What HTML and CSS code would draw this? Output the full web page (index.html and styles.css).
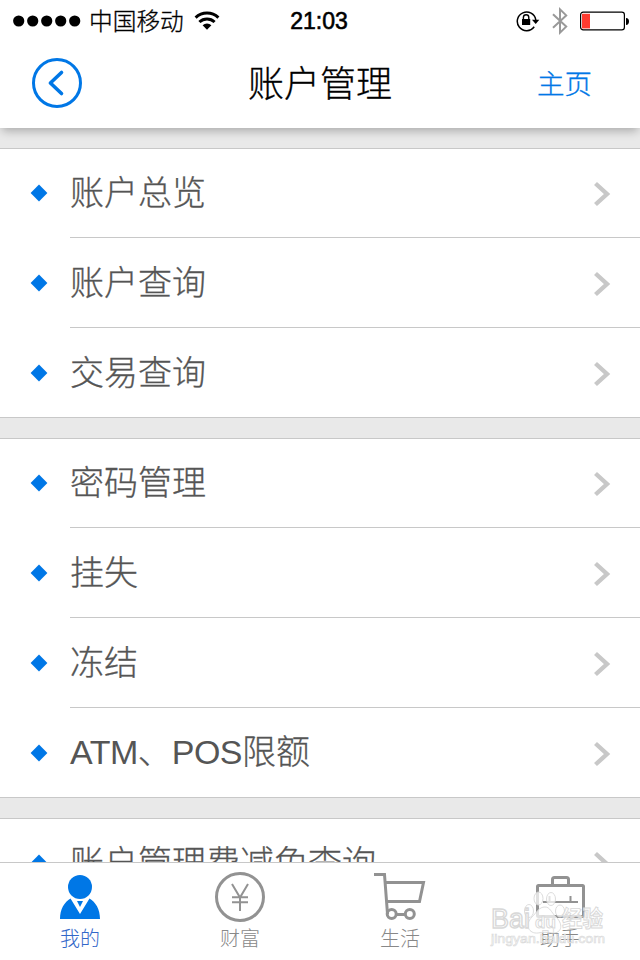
FILE: index.html
```html
<!DOCTYPE html>
<html lang="zh-CN">
<head>
<meta charset="utf-8">
<title>账户管理</title>
<link rel="stylesheet" href="styles.css">
</head>
<body>
<svg class="defs" width="0" height="0" aria-hidden="true">
  <symbol id="chevron" viewBox="0 0 18 26"><path d="M2.5 2.5 14 13 2.5 23.5" fill="none" stroke="#c8c8c8" stroke-width="4.4"/></symbol>
  <symbol id="diamond" viewBox="0 0 18 18"><path d="M9 .6 17.4 9 9 17.4.6 9Z" fill="#0077e6"/></symbol>
</svg>
<div class="app">
  <header class="header">
    <div class="status">
      <div class="status-left">
        <svg class="signal" width="68" height="12" viewBox="0 0 68 12"><circle cx="5.7" cy="6" r="5.6"/><circle cx="19.7" cy="6" r="5.6"/><circle cx="33.7" cy="6" r="5.6"/><circle cx="47.7" cy="6" r="5.6"/><circle cx="61.7" cy="6" r="5.6"/></svg>
        <span class="carrier">中国移动</span>
        <svg class="wifi" width="26" height="20" viewBox="0 0 26 20"><path d="M1.6 6.6a16.5 16.5 0 0 1 22.8 0M5.4 11a11 11 0 0 1 15.2 0" fill="none" stroke="#000" stroke-width="3"/><path d="M8.6 14.2a6.5 6.5 0 0 1 8.8 0L13 18.8Z"/></svg>
      </div>
      <div class="time">21:03</div>
      <div class="status-right">
        <svg width="24" height="22" viewBox="0 0 24 22"><path d="M18.2 16.7A9.3 9.3 0 1 1 19.8 10" fill="none" stroke="#000" stroke-width="1.5"/><path d="M16 9.8h7.3L19.7 14Z"/><rect x="6" y="9" width="8.2" height="6"/><path d="M7.4 9.5V7.4a2.7 2.7 0 0 1 5.4 0v2.1" fill="none" stroke="#000" stroke-width="1.4"/></svg>
        <svg class="bluetooth" width="16" height="28" viewBox="0 0 16 28"><path d="M1 7.2 14.2 19.6 8 25.6V2.4l6.2 6L1 20.8" fill="none" stroke="#999" stroke-width="2"/></svg>
        <svg class="battery" width="50" height="20" viewBox="0 0 50 20"><rect x=".6" y="1.1" width="43.8" height="17.8" rx="2.6" fill="none" stroke="#000" stroke-width="1.2"/><rect x="2" y="2.8" width="8" height="14.6" fill="#ff3b30"/><path d="M46 7q3 .4 3 3.4T46 14Z"/></svg>
      </div>
    </div>
    <nav class="navbar">
      <svg class="back" width="50" height="50" viewBox="0 0 50 50"><g fill="none" stroke="#0077e6" stroke-width="3"><circle cx="25" cy="25" r="23.5"/><path d="M29.5 14.5 18.4 25l11.1 10.5" stroke-width="3.6" stroke-linecap="round" stroke-linejoin="round"/></g></svg>
      <h1 class="title">账户管理</h1>
      <a class="home">主页</a>
    </nav>
  </header>
  <main class="content">
    <ul class="group">
      <li class="row"><svg class="mark"><use href="#diamond"/></svg><div class="cell"><span>账户总览</span><svg class="arrow"><use href="#chevron"/></svg></div></li>
      <li class="row"><svg class="mark"><use href="#diamond"/></svg><div class="cell"><span>账户查询</span><svg class="arrow"><use href="#chevron"/></svg></div></li>
      <li class="row"><svg class="mark"><use href="#diamond"/></svg><div class="cell"><span>交易查询</span><svg class="arrow"><use href="#chevron"/></svg></div></li>
    </ul>
    <ul class="group">
      <li class="row"><svg class="mark"><use href="#diamond"/></svg><div class="cell"><span>密码管理</span><svg class="arrow"><use href="#chevron"/></svg></div></li>
      <li class="row"><svg class="mark"><use href="#diamond"/></svg><div class="cell"><span>挂失</span><svg class="arrow"><use href="#chevron"/></svg></div></li>
      <li class="row"><svg class="mark"><use href="#diamond"/></svg><div class="cell"><span>冻结</span><svg class="arrow"><use href="#chevron"/></svg></div></li>
      <li class="row"><svg class="mark"><use href="#diamond"/></svg><div class="cell"><span><span class="latin">ATM</span>、<span class="latin">POS</span>限额</span><svg class="arrow"><use href="#chevron"/></svg></div></li>
    </ul>
    <ul class="group">
      <li class="row"><svg class="mark"><use href="#diamond"/></svg><div class="cell"><span>账户管理费减免查询</span><svg class="arrow"><use href="#chevron"/></svg></div></li>
    </ul>
  </main>
  <footer class="tabs">
    <a class="tab active">
      <svg width="54" height="54" viewBox="0 0 54 54"><g fill="#0077e6"><circle cx="27" cy="16" r="12"/><path d="M17.5 27.5 27 43l9.500-15.500C42.500 31 47 38 47 48H7c0-10 4.500-17 10.500-20.500Z"/><path d="M24 30h6l-3 6Z"/></g></svg>
      <span>我的</span>
    </a>
    <a class="tab">
      <svg width="54" height="54" viewBox="0 0 54 54"><g fill="none" stroke="#929292"><circle cx="27" cy="26" r="23.500" stroke-width="3"/><path d="M19 13 27 26.500 35 13M27 26v14M19 26.300h16M19 31.300h16" stroke-width="2"/></g></svg>
      <span>财富</span>
    </a>
    <a class="tab">
      <svg width="54" height="54" viewBox="0 0 54 54"><g fill="none" stroke="#929292" stroke-width="3"><path d="M1 3.500h10.500L14.500 43M12 11.500h38.500L46.500 30.500H14M24 43.500h8"/><circle cx="18.700" cy="43" r="4.500"/><circle cx="36.800" cy="43" r="4.500"/></g></svg>
      <span>生活</span>
    </a>
    <a class="tab">
      <svg width="54" height="54" viewBox="0 0 54 54"><g fill="none" stroke="#929292" stroke-width="3"><rect x="4.500" y="14.500" width="46" height="31" rx="1"/><path d="M19.500 14V8.500q0-2 2-2h12q2 0 2 2V14"/><path d="M10 31h35M16.500 31v-6M37.500 31v-6" stroke-width="2"/></g></svg>
      <span>助手</span>
    </a>
    <svg class="watermark" width="120" height="62" viewBox="0 0 120 62">
      <g fill="#fff" fill-opacity=".72" stroke="#d8d8d8" stroke-width=".9">
        <ellipse cx="48.500" cy="11.500" rx="4.500" ry="6.500"/><ellipse cx="61" cy="12" rx="4.500" ry="6.500"/><ellipse cx="39" cy="24" rx="4.500" ry="6.500"/><ellipse cx="70" cy="24" rx="4.500" ry="6"/>
        <path d="M55 20c5 0 6 5 11 10 9 9 4 17-4 16-5-1-9-1-14 0-9 1-14-8-6-16 5-5 7-10 13-10Z"/>
        <text x="1" y="41" textLength="39" lengthAdjust="spacingAndGlyphs" class="wm-logo">Bai</text>
        <text x="45" y="41" class="wm-du">du</text>
        <text x="72" y="39" textLength="41" lengthAdjust="spacingAndGlyphs" class="wm-cn">经验</text>
        <text x="1" y="55.500" textLength="114" lengthAdjust="spacingAndGlyphs" class="wm-url">jingyan.baidu.com</text>
      </g>
    </svg>
  </footer>
</div>
</body>
</html>
```
FILE: styles.css
```css
* { box-sizing: border-box; }
body {
  margin: 0;
  background: #fff;
  font-family: "Liberation Sans", "Noto Sans CJK SC", sans-serif;
  font-weight: 300;
}
h1, ul { margin: 0; padding: 0; font-weight: 300; list-style: none; }
svg { display: block; flex: none; }
.defs { position: absolute; }
.app { width: 640px; height: 960px; display: flex; flex-direction: column; overflow: hidden; }

.header {
  position: relative;
  z-index: 1;
  height: 128px;
  flex: none;
  background: #fff;
  box-shadow: 0 5px 9px -2px rgba(0, 0, 0, .27);
}
.status { height: 40px; display: grid; grid-template-columns: 1fr 80px 1fr; align-items: center; }
.status-left { display: flex; align-items: center; padding-left: 13px; }
.carrier { margin-left: 8px; width: 96px; font: 300 23.700px/38px "Noto Sans CJK SC", sans-serif; padding-bottom: 2px; white-space: nowrap; -webkit-text-stroke: .3px #000; }
.wifi { margin-left: 9px; }
.time { font-size: 23px; font-weight: 400; line-height: 42px; text-align: center; -webkit-text-stroke: .6px #000; margin-left: -2px; }
.status-right { display: flex; align-items: center; justify-content: flex-end; padding-right: 10px; }
.bluetooth { margin-left: 12px; }
.battery { margin-left: 12px; }

.navbar { height: 88px; display: grid; grid-template-columns: 216px 144px 1fr; align-items: center; padding: 0 48px 0 32px; }
.back { margin-top: -2px; }
.title { font: 300 36px/82px "Noto Sans CJK SC", sans-serif; color: #000; padding-bottom: 6px; white-space: nowrap; -webkit-text-stroke: .3px #000; }
.home { justify-self: end; font: 300 27.500px/78px "Noto Sans CJK SC", sans-serif; color: #0077e6; padding-bottom: 4px; -webkit-text-stroke: .3px #0077e6; }

.content { flex: 1; min-height: 0; overflow: hidden; background: #e9e9e9; padding-top: 20px; }
.group { background: #fff; border-top: 1px solid #c8c8c8; margin-bottom: 20px; }
.row { height: 90px; display: flex; align-items: center; padding-left: 30px; }
.row:first-child { height: 89px; }
.row:first-child .mark { margin-bottom: 1px; }
.row:last-child { border-bottom: 1px solid #c8c8c8; }
.row:not(:last-child) .cell { border-bottom: 1px solid #c8c8c8; }
.mark { width: 18px; height: 18px; }
.cell {
  flex: 1;
  align-self: stretch;
  display: flex;
  align-items: center;
  justify-content: space-between;
  margin-left: 22px;
  padding-right: 29px;
  color: #555;
  font-family: "Noto Sans CJK SC", sans-serif;
  font-size: 34px;
  line-height: 80px;
  white-space: nowrap;
}
.cell > span { padding-bottom: 4px; -webkit-text-stroke: .3px #555; }
.latin { font-family: "Liberation Sans", sans-serif; letter-spacing: -.5px; -webkit-text-stroke: 0; }
.arrow { width: 18px; height: 26px; margin-top: 2px; }

.tabs {
  position: relative;
  height: 98px;
  flex: none;
  display: grid;
  grid-template-columns: repeat(4, 1fr);
  background: #fff;
  border-top: 1px solid #c8c8c8;
}
.tab {
  display: flex;
  flex-direction: column;
  align-items: center;
  padding-top: 8px;
  color: #888;
  font: 300 20px/26px "Noto Sans CJK SC", sans-serif;
}
.active { color: #3267c9; }
.watermark { position: absolute; left: 490px; top: 24px; overflow: visible; }
.watermark text { font-family: "Liberation Sans", "Noto Sans CJK SC", sans-serif; font-weight: 700; }
.watermark .wm-logo { font-size: 27px; font-weight: 400; stroke-width: 1.4px; }
.watermark .wm-du { font-size: 17px; }
.watermark .wm-cn { font-size: 22px; }
.watermark .wm-url { font-size: 13px; font-weight: 400; stroke-width: .6px; }
```
